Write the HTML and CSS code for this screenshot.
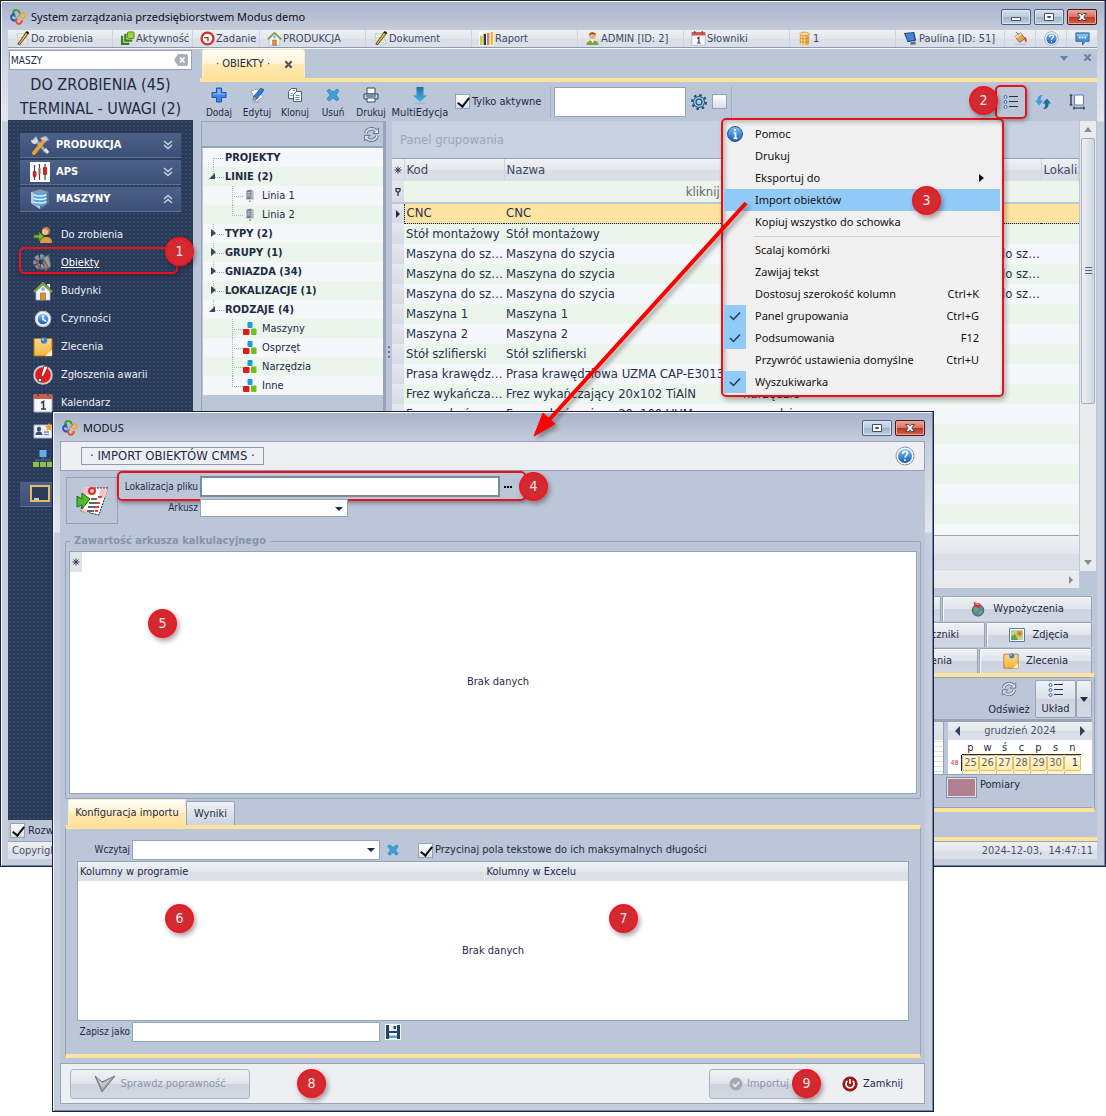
FILE: index.html
```html
<!DOCTYPE html>
<html lang="pl">
<head>
<meta charset="utf-8">
<meta name="viewport" content="width=device-width, initial-scale=1">
<title>System zarządzania przedsiębiorstwem Modus demo</title>
<link rel="stylesheet" href="styles.css">
</head>
<body>
<svg class="sprite" aria-hidden="true">
  <defs>
    <linearGradient id="g-blue" x1="0" y1="0" x2="0" y2="1"><stop offset="0" stop-color="#7fc4f5"/><stop offset="1" stop-color="#1458b8"/></linearGradient>
    <linearGradient id="g-gold" x1="0" y1="0" x2="0" y2="1"><stop offset="0" stop-color="#fbd98a"/><stop offset="1" stop-color="#f4b73c"/></linearGradient>
    <linearGradient id="g-down" x1="0" y1="0" x2="0" y2="1"><stop offset="0" stop-color="#1f6f9e"/><stop offset="1" stop-color="#4bb4e6"/></linearGradient>
  </defs>
  <symbol id="i-logo" viewBox="0 0 16 16"><g fill="none" stroke-width="2"><path d="M6 7.500A3.200 3.200 0 1 1 9.500 4.500" stroke="#3b9a3b"/><path d="M5 5.500A3 3 0 1 0 5.500 11" stroke="#2b4fc4"/><circle cx="12.500" cy="6.500" r="2.500" stroke="#f0a83c"/><path d="M7.500 9.500A2.800 2.800 0 1 0 11.500 11" stroke="#e0522a"/><path d="M5 11L11 4" stroke="#7387a8" stroke-width="1"/></g></symbol>
  <symbol id="i-pencil" viewBox="0 0 16 16"><path d="M2 3h9l3 11H4z" fill="#f4f4ee" stroke="#aab0b8" stroke-width=".6"/><path d="M4 7h7M4.500 9.500h8M5 12h7" stroke="#c3c8cf"/><path d="M3 14L12 1l2.500 1.500L5 14.500z" fill="#e8b92e" stroke="#3b3320" stroke-width=".9"/><path d="M11 1.500L14 3.500 15 1.500 13 0z" fill="#222"/></symbol>
  <symbol id="i-activity" viewBox="0 0 16 16"><path d="M1 5v10h9v-2.500H3.500V5zM4.500 3v8.500H13V9H7V3z" fill="#3f7f22"/><rect x="8" y="1" width="7" height="7" rx="1" fill="#9ed536" stroke="#4f8a22"/></symbol>
  <symbol id="i-clockred" viewBox="0 0 16 16"><circle cx="8" cy="8" r="6.300" fill="#fff" stroke="#c9302c" stroke-width="2.400"/><path d="M4.500 7H8.500V11" fill="none" stroke="#b02020" stroke-width="1.400"/></symbol>
  <symbol id="i-house" viewBox="0 0 20 20"><path d="M3 10L10 4l7 6v9H3z" fill="#f4f6f9" stroke="#aab3c0" stroke-width=".8"/><path d="M14 3h3v4l-3-3z" fill="#fff"/><path d="M1 11L10 2.500 19 11" fill="none" stroke="#7da33b" stroke-width="2.400"/><circle cx="10" cy="8" r="2" fill="#8fb7e8"/><path d="M7.500 12h5v7h-5z" fill="#e0903c" stroke="#b0702a" stroke-width=".8"/></symbol>
  <symbol id="i-report" viewBox="0 0 16 16"><path d="M0 0h16v16H0z" fill="#f7f8f4"/><path d="M1 5h3v10H1z" fill="#c3d432"/><path d="M5 3h2.500v12H5z" fill="#2b3350"/><path d="M8.500 2h2.500v13H8.500z" fill="#f07060"/><path d="M12.500 1H15v14h-2.500z" fill="#f4bd1a"/></symbol>
  <symbol id="i-user" viewBox="0 0 16 16"><path d="M1.500 15c0-4 3-5 6.500-5s6.500 1 6.500 5z" fill="#77a83a"/><path d="M6 9h4l-2 4z" fill="#fff"/><circle cx="8" cy="5" r="3.600" fill="#e8b078"/><path d="M4 5c0-5 8-5 8 0-1-2-6-2-8 0z" fill="#9a4a20"/></symbol>
  <symbol id="i-cal" viewBox="0 0 20 20"><path d="M1 2h18v17H1z" fill="#f7f8fa" stroke="#aab3c4"/><path d="M1 1.500h18V6H1z" fill="#cf5a48"/><path d="M5 0v3M15 0v3" stroke="#7c3a34" stroke-width="1.600"/><path d="M8 10l2.500-1.500V16M8 16h5" fill="none" stroke="#333c50" stroke-width="1.600"/></symbol>
  <symbol id="i-db" viewBox="0 0 16 16"><path d="M3 3v10c0 3 10 3 10 0V3z" fill="#e9a83a"/><path d="M5 4v11M8 4v12" stroke="#fbdf9e" stroke-width="1.600"/><ellipse cx="8" cy="3" rx="5" ry="1.800" fill="#fbe0a0" stroke="#c98a2a" stroke-width=".7"/><path d="M3 7c1 2 9 2 10 0M3 10.500c1 2 9 2 10 0" fill="none" stroke="#b87820" stroke-width=".7"/></symbol>
  <symbol id="i-pc" viewBox="0 0 16 16"><path d="M1 2l11-1 2 9-9 2z" fill="#27406f"/><path d="M2.500 3l8.500-.8 1.500 7-7 1.500z" fill="#3f86d8"/><path d="M8 12l5-1 1 3-6 1z" fill="#6a7384"/></symbol>
  <symbol id="i-paint" viewBox="0 0 16 16"><path d="M2 13.500h12V15H2z" fill="#c1c6ce"/><path d="M2 6l6-4 5 6-6 4z" fill="#e0a850" stroke="#7a4a1c" stroke-width=".8"/><path d="M2 6l6-4 1 2-6 4z" fill="#f8e3b4"/><path d="M13 6c2 2 2 5 1 6-2-1-2-4-1-6z" fill="#d64028"/><path d="M6 4L3 1" stroke="#555"/></symbol>
  <symbol id="i-help" viewBox="0 0 20 20"><circle cx="10" cy="10" r="9" fill="#fff" stroke="#8b93a3"/><circle cx="10" cy="10" r="7" fill="url(#g-blue)"/><path d="M7.500 8c0-3.500 5-3.200 5-.4 0 1.900-2.400 1.800-2.400 4M10 13.200V15" fill="none" stroke="#fff" stroke-width="1.700"/></symbol>
  <symbol id="i-chat" viewBox="0 0 16 16"><path d="M1 2h14v9h-4l-3 4v-4H1z" fill="#4a94cf" stroke="#2a6aa5"/><path d="M2 3h12v3H2z" fill="#82bbe8"/><path d="M4 7h2M7 7h2M10 7h2" stroke="#fff" stroke-width="1.500"/></symbol>
  <symbol id="i-tools" viewBox="0 0 20 20"><path d="M4 3l12 14" stroke="#9aa5b8" stroke-width="3"/><path d="M1 5c0 4 4 5 6 3l1-2-2-5-1 3-2 1z" fill="#d5dbe6"/><path d="M10 3l6-2 3 4-3 1-1 2-3-3z" fill="#c3cbd8" stroke="#7b879b" stroke-width=".5"/><path d="M13 7L4 18" stroke="#f0a030" stroke-width="3.600" stroke-linecap="round"/><path d="M15 14l3 4" stroke="#dde3ec" stroke-width="3"/></symbol>
  <symbol id="i-aps" viewBox="0 0 20 20"><path d="M0 0h20v20H0z" fill="#fff"/><path d="M4.500 3v15M9.500 2v16M15 2v16" stroke="#444" stroke-width="1.200"/><rect x="2.800" y="9" width="3.600" height="6" rx="1" fill="#cf2222"/><rect x="8.500" y="6" width="2" height="6" fill="#777"/><rect x="13" y="5" width="4" height="8" rx="1" fill="#cf2222"/></symbol>
  <symbol id="i-machine" viewBox="0 0 20 20"><path d="M1 3l9-2.500L19 3v11l-9 6-9-6z" fill="#8d9bb0"/><path d="M1 3l9 3v14l-9-6z" fill="#c2ccda"/><path d="M10 6l9-3v11l-9 6z" fill="#5c6d88"/><path d="M3.500 4h13v10c0 4-13 4-13 0z" fill="#58a6dc"/><path d="M3.500 5.500c2 2 11 2 13 0M3.500 9c2 2 11 2 13 0M3.500 12.500c2 2 11 2 13 0" fill="none" stroke="#e1f0fb" stroke-width="1.500"/></symbol>
  <symbol id="i-todo" viewBox="0 0 20 18"><circle cx="13" cy="5" r="4" fill="#c97a3a"/><circle cx="12" cy="6" r="3" fill="#f1c08c"/><path d="M7 17c0-5 3-6 6-6s6 1 6 6z" fill="#e09a3a"/><path d="M1 9h5V6l5 4.500L6 15v-3H1z" fill="#79b83a" stroke="#3f7a1c" stroke-width=".8"/></symbol>
  <symbol id="i-gearobj" viewBox="0 0 18 18"><circle cx="7" cy="8" r="4.500" fill="none" stroke="#8b939c" stroke-width="4.600" stroke-dasharray="3 1"/><path d="M9 4l5-2 2 10-5 4z" fill="#8fa4a0" stroke="#5c6e70"/><path d="M2 6l4 8M5 14h9M10 6l4 8" stroke="#a05248" stroke-width="1.300"/></symbol>
  <symbol id="i-clock" viewBox="0 0 18 18"><circle cx="9" cy="9" r="7" fill="#f5f6f8" stroke="#b6bcc8"/><circle cx="9" cy="9" r="4.800" fill="url(#g-blue)"/><path d="M9 5.500v4l3 1.500" fill="none" stroke="#fff" stroke-width="1.400"/></symbol>
  <symbol id="i-note" viewBox="0 0 20 20"><path d="M1 1.500h18V19H1z" fill="url(#g-gold)" stroke="#b9721f"/><path d="M12 19l7-6v6z" fill="#fff0bd"/><circle cx="11" cy="3.500" r="3.200" fill="#3f7fc4"/><circle cx="10" cy="2.500" r="1" fill="#bfe0fa"/></symbol>
  <symbol id="i-alarm" viewBox="0 0 20 20"><circle cx="10" cy="10" r="8.800" fill="#e31b1b" stroke="#c5c8cc" stroke-width="2"/><path d="M11 1l4 1-5 10-2-1zM6 13l3 1-1 3-3-1z" fill="#fff" stroke="#7a1414" stroke-width=".8"/></symbol>
  <symbol id="i-card" viewBox="0 0 20 16"><path d="M1 2h18v13H1z" fill="#eef2f7" stroke="#a8b4c6"/><circle cx="6" cy="6" r="2.200" fill="#35507a"/><path d="M2.500 12c0-5 7-5 7 0z" fill="#35507a"/><path d="M11 9h5M11 11.500h5" stroke="#7f92ac" stroke-width="1.300"/><path d="M16 0l1.500 2.500L20 3l-2 2 .5 3L16 6.500 13.500 8l.5-3-2-2 2.500-.5z" fill="#f2a33a"/></symbol>
  <symbol id="i-org" viewBox="0 0 20 20"><path d="M10 7v4M3 13v-2h14v2" stroke="#55729a" fill="none"/><rect x="6.500" y="1" width="7" height="7" fill="#5fb0ea"/><path d="M0 13h6v5H0zM7 13h6v5H7zM14 13h6v5h-6z" fill="#8fc43a"/></symbol>
  <symbol id="i-board" viewBox="0 0 20 18"><path d="M1 1h18v15H1z" fill="#2c3d5c" stroke="#e9b76a" stroke-width="2"/><path d="M4 14h5" stroke="#fff" stroke-width="1.500"/></symbol>
  <symbol id="i-plus" viewBox="0 0 16 16"><path d="M5.500 1h5v4.500H15v5h-4.500V15h-5v-4.500H1v-5h4.500z" fill="#3f86e8" stroke="#2350b8"/><path d="M6.500 2h3v4.500H14v1H2v-1h4.500z" fill="#7fb4fa"/></symbol>
  <symbol id="i-edit" viewBox="0 0 16 16"><path d="M2 4l6-2 6 8-7 5z" fill="#fff" stroke="#9aa3b4"/><path d="M4 13l1-4 7-8 3 2-7 9z" fill="#2c7fd8" stroke="#1b4f9a" stroke-width=".8"/><path d="M4 13l1-3 2 2z" fill="#f0b060"/><path d="M3 15h9" stroke="#9aa3b4"/></symbol>
  <symbol id="i-clone" viewBox="0 0 16 16"><g fill="#fff" stroke="#4a6184"><path d="M4.500 1.500h5v10h-8v-7z"/><path d="M9.500 4.500h5v10h-8v-7z"/></g><path d="M8.500 8.500h4M8.500 10.500h4M8.500 12.500h4M3.500 6.500h2M3.500 8.500h2M6 3.500h2" stroke="#5d86bd"/></symbol>
  <symbol id="i-x" viewBox="0 0 16 16"><path d="M2 4l2-2 4 3 4-3 2 2-3 4 3 4-2 2-4-3-4 3-2-2 3-4z" fill="#3da0d8" stroke="#2b82b8" stroke-width=".7"/></symbol>
  <symbol id="i-print" viewBox="0 0 16 16"><path d="M4 1h8v6H4z" fill="#fff" stroke="#33486b"/><path d="M1 7h14v5H1z" fill="#c7d6ea" stroke="#26406e"/><path d="M3 9h10" stroke="#26406e"/><path d="M4 11h8v4H4z" fill="#fff" stroke="#33486b"/></symbol>
  <symbol id="i-down" viewBox="0 0 16 18"><path d="M4.500 0h7v8.500h3.500l-7 6.500-7-6.500h3.500z" fill="url(#g-down)"/><path d="M2 16.500h12" stroke="#a5b8cc" stroke-width="1.500"/></symbol>
  <symbol id="i-gear" viewBox="0 0 18 18"><circle cx="9" cy="9" r="7" fill="none" stroke="#1d4f74" stroke-width="2" stroke-dasharray="2.600 2.900"/><circle cx="9" cy="9" r="5.400" fill="#cfe6f4" stroke="#1d5f8c" stroke-width="1.200"/><circle cx="9" cy="9" r="3" fill="#bcc7d8" stroke="#1d5f8c" stroke-width="1.400"/></symbol>
  <symbol id="i-list" viewBox="0 0 16 16"><g fill="#dcecf8" stroke="#3c6ea8"><circle cx="2.500" cy="3" r="1.500"/><circle cx="2.500" cy="8" r="1.500"/><circle cx="2.500" cy="13" r="1.500"/></g><path d="M6 2.500h9M6 7.500h9M6 12.500h9" stroke="#27304a" stroke-width="1"/></symbol>
  <symbol id="i-sync" viewBox="0 0 16 16"><path d="M8 1C4 1 2 3 2.500 6.500H0l4 5 4.500-5H6C5.500 4.500 6 2.500 8 1z" fill="#3aa0da"/><path d="M8 15c4 0 6-2 5.500-5.500H16l-4-5-4.500 5H10c.5 2 0 4-2 5.500z" fill="#1c6f9f"/></symbol>
  <symbol id="i-fit" viewBox="0 0 16 16"><path d="M5.500 1h9v10h-9z" fill="#fdfdfe" stroke="#5c7ab0"/><path d="M2 1v10M.5 1h3M.5 11h3M5 14h10M5 12.500v3M15 12.500v3" stroke="#1f2638" stroke-width="1.200"/></symbol>
  <symbol id="i-refresh" viewBox="0 0 18 18"><g fill="none" stroke="#5c6c90" stroke-width="3.600"><path d="M3 8C4 2.500 11 1.500 14 5"/><path d="M15 10c-1 5.500-8 6.500-11 3"/></g><path d="M16.500 2v6h-6zM1.500 16v-6h6z" fill="#dfe6f2" stroke="#5c6c90"/><g fill="none" stroke="#dfe6f2" stroke-width="1.800"><path d="M3 8C4 2.500 11 1.500 14 5"/><path d="M15 10c-1 5.500-8 6.500-11 3"/></g></symbol>
  <symbol id="i-building" viewBox="0 0 12 16"><path d="M2 2l5-1.500V12H2z" fill="#777a94"/><path d="M7 .5L10 2v10H7z" fill="#a8aabd"/><path d="M3 4h3M3 6h3M3 8h3M8 4h1M8 6h1M8 8h1" stroke="#e8e9f1" stroke-width=".8"/><path d="M1 12h10" stroke="#d0d3df"/><path d="M5 14h2" stroke="#36d048" stroke-width="1.600"/></symbol>
  <symbol id="i-cubes" viewBox="0 0 14 14"><rect x="4.500" y="0" width="5" height="6" rx="1" fill="#1c9be0"/><rect x="0" y="7" width="6.500" height="6" rx="1" fill="#e01818"/><rect x="8" y="6.500" width="5.500" height="6.500" rx="1" fill="#6cc01e"/></symbol>
  <symbol id="i-info" viewBox="0 0 18 18"><circle cx="9" cy="9" r="7.500" fill="url(#g-blue)" stroke="#1c5f9c"/><path d="M9 4v2M7.500 8H9.500v5M7.500 13.300h4" fill="none" stroke="#fff" stroke-width="1.700"/></symbol>
  <symbol id="i-globe" viewBox="0 0 16 18"><circle cx="8" cy="10.500" r="6.500" fill="#5a86b0" stroke="#2f5d50"/><path d="M3 8l4-1 1 3-3 3zM9 12l4-2-1 4-3 2z" fill="#69b04a"/><path d="M3 1l8 2-1 5-6-2z" fill="#d83030"/><path d="M5 3l4 1" stroke="#fbd0d0"/></symbol>
  <symbol id="i-photo" viewBox="0 0 16 14"><path d="M.5.500h15v13H.5z" fill="#fff" stroke="#5b77ad"/><path d="M2 2h12v10H2z" fill="#b8d48c"/><path d="M2 9l4-3 3 6H2z" fill="#6aa33a"/><circle cx="10.500" cy="5.500" r="3" fill="#e39a4a"/><circle cx="10.500" cy="5.500" r="1.100" fill="#a05418"/></symbol>
  <symbol id="i-import" viewBox="0 0 36 32"><path d="M11 3h23l-9 27-18-4z" fill="#fff" stroke="#222" stroke-dasharray="2 1"/><path d="M10 2h11l-2 8H8zM26 4l8 0-3 9-6-1zM7 26l3-3 6 6z" fill="#f7c2c0"/><circle cx="18" cy="6" r="3" fill="#f4c0bc" stroke="#d83030" stroke-width="2"/><path d="M17 14h6M15 18h8M14 22h8M13 26h7" stroke="#333" stroke-width="1.300"/><path d="M24 12h4M23 18h3M22 22h3M21 26h3" stroke="#e04040" stroke-width="2"/><path d="M3 11l5 3V8l8 6-8 10v-4l-5 2z" fill="#4fbd24" stroke="#27601c"/></symbol>
  <symbol id="i-save" viewBox="0 0 16 16"><path d="M0 0h16v16H0z" fill="#f2f5f8"/><path d="M1 1h14v14H1z" fill="#26405f"/><path d="M4 1h8v6H4z" fill="#e4ebf2"/><path d="M8.500 2h2.500v3H8.500z" fill="#26405f"/><path d="M4 9h8v6H4z" fill="#fff"/><path d="M4 11.500h8V14H4z" fill="#4f9fda"/></symbol>
  <symbol id="i-verify" viewBox="0 0 22 18"><path d="M1 1l7 6L21 1 8 17z" fill="#9b9da1" stroke="#74767b"/><path d="M3 3l5 5 1 6z" fill="#d4d6da"/><path d="M8 8l10-5-9 10z" fill="#c3c5ca"/></symbol>
  <symbol id="i-ok" viewBox="0 0 14 14"><circle cx="7" cy="7" r="6.500" fill="#a6a9af"/><path d="M4 7l2.300 2.300L10.300 5" fill="none" stroke="#e9eaee" stroke-width="1.800"/></symbol>
  <symbol id="i-power" viewBox="0 0 18 18"><circle cx="9" cy="9" r="8" fill="#b01010" stroke="#6a1212"/><path d="M6 5.500a4.500 4.500 0 1 0 6 0M9 3.500V9" fill="none" stroke="#fff" stroke-width="2"/></symbol>
  <symbol id="i-clear" viewBox="0 0 14 12"><path d="M4 0h8q2 0 2 2v8q0 2-2 2H4L0 6z" fill="#a9b0ba"/><path d="M6 3.500l4.500 5M10.500 3.500L6 8.500" stroke="#fff" stroke-width="1.700"/></symbol>
  <symbol id="i-chev" viewBox="0 0 10 10"><path d="M1 1l4 3.500L9 1M1 5l4 3.500L9 5" fill="none" stroke="#c9d3e3" stroke-width="1.400"/></symbol>
  <symbol id="i-close" viewBox="0 0 10 10"><path d="M1.500 1.500l7 7M8.500 1.500l-7 7" stroke="currentColor" stroke-width="2.400"/></symbol>
  <symbol id="i-star" viewBox="0 0 8 8"><path d="M4 .5v7M.5 4h7M1.500 1.500l5 5M6.500 1.500l-5 5" stroke="#27304a" stroke-width=".9"/></symbol>
  <symbol id="i-pin" viewBox="0 0 8 8"><path d="M2 .5h4v2.500L4 4.500 2 3zM4 4v4" fill="none" stroke="#27304a" stroke-width="1.300"/></symbol>
  <symbol id="i-check" viewBox="0 0 12 10"><path d="M1 5l3.500 3.500L11 1.500" fill="none" stroke="#233a57" stroke-width="1.500"/></symbol>
  <symbol id="i-wmin" viewBox="0 0 12 10"><path d="M1.500 5.500h9v3h-9z" fill="#fff" stroke="#44506a"/></symbol>
  <symbol id="i-wmax" viewBox="0 0 12 10"><path d="M1.500 1.500h9v7h-9z" fill="#fff" stroke="#44506a"/><path d="M4.500 4.500h3v1h-3z" fill="#fff" stroke="#44506a"/></symbol>
  <symbol id="i-wclose" viewBox="0 0 12 10"><path d="M1.500 1.500h3L6 3.200 7.500 1.500h3L7.800 5l2.700 3.500h-3L6 6.800 4.500 8.500h-3L4.200 5z" fill="#fff" stroke="#4f3a48" stroke-width=".9"/></symbol>
</svg>

<div class="desktop">
  <section class="window">
    <header class="titlebar">
      <svg class="logo"><use href="#i-logo"/></svg>
      <h1>System zarządzania przedsiębiorstwem Modus demo</h1>
      <div class="winbtns">
        <button type="button" aria-label="Minimalizuj"><svg><use href="#i-wmin"/></svg></button>
        <button type="button" aria-label="Maksymalizuj"><svg><use href="#i-wmax"/></svg></button>
        <button type="button" class="red" aria-label="Zamknij okno"><svg><use href="#i-wclose"/></svg></button>
      </div>
    </header>

    <nav class="quickbar">
      <a href="#"><svg><use href="#i-pencil"/></svg>Do zrobienia</a>
      <a href="#"><svg><use href="#i-activity"/></svg>Aktywność</a>
      <a href="#"><svg><use href="#i-clockred"/></svg>Zadanie</a>
      <a href="#"><svg><use href="#i-house"/></svg>PRODUKCJA</a>
      <a href="#"><svg><use href="#i-pencil"/></svg>Dokument</a>
      <a href="#"><svg><use href="#i-report"/></svg>Raport</a>
      <a href="#"><svg><use href="#i-user"/></svg>ADMIN [ID: 2]</a>
      <a href="#"><svg><use href="#i-cal"/></svg>Słowniki</a>
      <a href="#"><svg><use href="#i-db"/></svg>1</a>
      <a href="#"><svg><use href="#i-pc"/></svg>Paulina [ID: 51]</a>
      <a href="#" aria-label="Kolory"><svg><use href="#i-paint"/></svg></a>
      <a href="#" aria-label="Pomoc"><svg><use href="#i-help"/></svg></a>
      <a href="#" aria-label="Wiadomości"><svg><use href="#i-chat"/></svg></a>
    </nav>

    <div class="workspace">
      <aside class="sidebar">
        <div class="search">
          <input type="text" value="MASZY" aria-label="Szukaj w menu">
          <svg><use href="#i-clear"/></svg>
        </div>
        <p class="counter">DO ZROBIENIA (45)</p>
        <p class="counter">TERMINAL - UWAGI (2)</p>
        <div class="navy">
          <button type="button" class="group"><svg><use href="#i-tools"/></svg><span>PRODUKCJA</span><svg class="chev"><use href="#i-chev"/></svg></button>
          <button type="button" class="group"><svg><use href="#i-aps"/></svg><span>APS</span><svg class="chev"><use href="#i-chev"/></svg></button>
          <button type="button" class="group"><svg><use href="#i-machine"/></svg><span>MASZYNY</span><svg class="chev up"><use href="#i-chev"/></svg></button>
          <ul class="links">
            <li><a href="#"><svg><use href="#i-todo"/></svg>Do zrobienia</a></li>
            <li class="current"><a href="#"><svg><use href="#i-gearobj"/></svg>Obiekty</a><span class="mark mark-nav"></span><span class="badge badge-1">1</span></li>
            <li><a href="#"><svg><use href="#i-house"/></svg>Budynki</a></li>
            <li><a href="#"><svg><use href="#i-clock"/></svg>Czynności</a></li>
            <li><a href="#"><svg><use href="#i-note"/></svg>Zlecenia</a></li>
            <li><a href="#"><svg><use href="#i-alarm"/></svg>Zgłoszenia awarii</a></li>
            <li><a href="#"><svg><use href="#i-cal"/></svg>Kalendarz</a></li>
            <li><a href="#" aria-label="Kontakty"><svg><use href="#i-card"/></svg></a></li>
            <li><a href="#" aria-label="Struktura"><svg><use href="#i-org"/></svg></a></li>
          </ul>
          <button type="button" class="group" aria-label="Tablica"><svg><use href="#i-board"/></svg></button>
        </div>
        <label class="expand"><input type="checkbox" checked>Rozwiń</label>
      </aside>

      <main class="main">
        <div class="tabbar">
          <button type="button" class="tab">· OBIEKTY ·<svg><use href="#i-close"/></svg></button>
          <div class="tabtools"><i class="tri"></i><svg><use href="#i-close"/></svg></div>
        </div>
        <div class="toolbar">
          <button type="button" class="tool"><svg><use href="#i-plus"/></svg>Dodaj</button>
          <button type="button" class="tool"><svg><use href="#i-edit"/></svg>Edytuj</button>
          <button type="button" class="tool"><svg><use href="#i-clone"/></svg>Klonuj</button>
          <button type="button" class="tool"><svg><use href="#i-x"/></svg>Usuń</button>
          <button type="button" class="tool"><svg><use href="#i-print"/></svg>Drukuj</button>
          <button type="button" class="tool wide"><svg><use href="#i-down"/></svg>MultiEdycja</button>
          <label class="active-only"><input type="checkbox" checked>Tylko aktywne</label>
          <input type="text" class="find" aria-label="Wyszukaj">
          <svg class="gear"><use href="#i-gear"/></svg>
          <input type="checkbox" class="flag" aria-label="Filtr">
          <div class="toolbar-end">
            <button type="button" class="listbtn" aria-label="Menu siatki"><svg><use href="#i-list"/></svg><span class="badge badge-2">2</span></button>
            <svg><use href="#i-sync"/></svg>
            <svg><use href="#i-fit"/></svg>
          </div>
        </div>

        <div class="split">
          <div class="treepane">
            <div class="treehead"><svg><use href="#i-refresh"/></svg></div>
            <ul class="tree">
              <li>PROJEKTY</li>
              <li class="open">LINIE (2)</li>
              <li class="sub"><svg><use href="#i-building"/></svg>Linia 1</li>
              <li class="sub last"><svg><use href="#i-building"/></svg>Linia 2</li>
              <li class="shut">TYPY (2)</li>
              <li class="shut">GRUPY (1)</li>
              <li class="shut">GNIAZDA (34)</li>
              <li class="shut">LOKALIZACJE (1)</li>
              <li class="open end">RODZAJE (4)</li>
              <li class="sub"><svg><use href="#i-cubes"/></svg>Maszyny</li>
              <li class="sub"><svg><use href="#i-cubes"/></svg>Osprzęt</li>
              <li class="sub"><svg><use href="#i-cubes"/></svg>Narzędzia</li>
              <li class="sub last"><svg><use href="#i-cubes"/></svg>Inne</li>
            </ul>
          </div>
          <div class="splitter"></div>
          <div class="gridpane">
            <div class="gridview">
              <div class="grouppanel">Panel grupowania</div>
              <div class="rows">
                <table class="grid">
                  <colgroup><col class="c-mark"><col class="c-kod"><col class="c-nazwa"><col class="c-kod"><col class="c-kod"><col class="c-kod"><col></colgroup>
                  <thead>
                    <tr><th><svg><use href="#i-star"/></svg></th><th>Kod</th><th>Nazwa</th><th></th><th></th><th></th><th>Lokalizacja</th></tr>
                    <tr class="filter"><td class="ind"><svg><use href="#i-pin"/></svg></td><td colspan="6">kliknij aby filtrować</td></tr>
                  </thead>
                  <tbody>
                    <tr class="sel"><td><i class="rowmark"></i></td><td>CNC</td><td>CNC</td><td></td><td></td><td></td><td></td></tr>
                    <tr><td></td><td>Stół montażowy</td><td>Stół montażowy</td><td></td><td></td><td></td><td></td></tr>
                    <tr><td></td><td>Maszyna do szycia</td><td>Maszyna do szycia</td><td></td><td></td><td>Maszyna do szycia</td><td></td></tr>
                    <tr><td></td><td>Maszyna do szycia</td><td>Maszyna do szycia</td><td></td><td></td><td>Maszyna do szycia</td><td></td></tr>
                    <tr><td></td><td>Maszyna do szycia</td><td>Maszyna do szycia</td><td></td><td></td><td>Maszyna do szycia</td><td></td></tr>
                    <tr><td></td><td>Maszyna 1</td><td>Maszyna 1</td><td></td><td></td><td></td><td></td></tr>
                    <tr><td></td><td>Maszyna 2</td><td>Maszyna 2</td><td></td><td></td><td></td><td></td></tr>
                    <tr><td></td><td>Stół szlifierski</td><td>Stół szlifierski</td><td></td><td></td><td></td><td></td></tr>
                    <tr><td></td><td>Prasa krawędziowa</td><td>Prasa krawędziowa UZMA CAP-E3013</td><td></td><td></td><td></td><td></td></tr>
                    <tr><td></td><td>Frez wykańczający</td><td>Frez wykańczający 20x102 TiAlN</td><td>narzędzie</td><td></td><td></td><td></td></tr>
                    <tr><td></td><td>Frez wykańczający</td><td>Frez wykańczający 20x100 VHM</td><td>narzędzie</td><td></td><td></td><td></td></tr>
                    <tr><td></td><td></td><td></td><td></td><td></td><td></td><td></td></tr>
                    <tr><td></td><td></td><td></td><td></td><td></td><td></td><td></td></tr>
                    <tr><td></td><td></td><td></td><td></td><td></td><td></td><td></td></tr>
                    <tr><td></td><td></td><td></td><td></td><td></td><td></td><td></td></tr>
                    <tr><td></td><td></td><td></td><td></td><td></td><td></td><td></td></tr>
                    <tr><td></td><td></td><td></td><td></td><td></td><td></td><td></td></tr>
                  </tbody>
                </table>
              </div>
              <div class="summary"></div>
              <div class="hscroll"><i></i></div>
            </div>
            <div class="vscroll"><i class="up"></i><span class="thumb"><b></b></span><i class="down"></i></div>
          </div>
        </div>

        <div class="lowtabs">
          <div><button type="button" class="rest"></button><button type="button" class="t1"><svg><use href="#i-globe"/></svg>Wypożyczenia</button></div>
          <div><button type="button" class="rest">Załączniki</button><button type="button" class="t2"><svg><use href="#i-photo"/></svg>Zdjęcia</button></div>
          <div><button type="button" class="rest">Zgłoszenia</button><button type="button" class="t3"><svg><use href="#i-note"/></svg>Zlecenia</button></div>
        </div>

        <div class="planner">
          <div class="plannerbar">
            <button type="button" class="tool"><svg><use href="#i-refresh"/></svg>Odśwież</button>
            <button type="button" class="tool raised"><svg><use href="#i-list"/></svg>Układ</button>
            <button type="button" class="drop" aria-label="Więcej układów"><i class="tri"></i></button>
          </div>
          <div class="plannerbody">
            <div class="timeline"></div>
            <div class="month">
              <div class="monthhead"><i class="left"></i>grudzień 2024<i class="right"></i></div>
              <table>
                <thead><tr><th class="week"></th><th>p</th><th>w</th><th>ś</th><th>c</th><th>p</th><th>s</th><th>n</th></tr></thead>
                <tbody>
                  <tr><th>48</th><td>25</td><td>26</td><td>27</td><td>28</td><td>29</td><td>30</td><td class="now">1</td></tr>
                </tbody>
              </table>
              <div class="nextweek"></div>
            </div>
          </div>
          <div class="legend"><i></i>Pomiary</div>
        </div>
        <div class="mainend"></div>
      </main>
    </div>
    <footer class="status"><span>Copyright ©</span><time>2024-12-03,&nbsp; 14:47:11</time></footer>

    <ul class="menu">
      <li><svg><use href="#i-info"/></svg><span>Pomoc</span></li>
      <li><span>Drukuj</span></li>
      <li><span>Eksportuj do</span><i></i></li>
      <li class="hot"><span>Import obiektów</span><span class="badge badge-3">3</span></li>
      <li><span>Kopiuj wszystko do schowka</span></li>
      <li class="line"></li>
      <li><span>Scalaj komórki</span></li>
      <li><span>Zawijaj tekst</span></li>
      <li><span>Dostosuj szerokość kolumn</span><kbd>Ctrl+K</kbd></li>
      <li class="on"><svg><use href="#i-check"/></svg><span>Panel grupowania</span><kbd>Ctrl+G</kbd></li>
      <li class="on"><svg><use href="#i-check"/></svg><span>Podsumowania</span><kbd>F12</kbd></li>
      <li><span>Przywróć ustawienia domyślne</span><kbd>Ctrl+U</kbd></li>
      <li class="on"><svg><use href="#i-check"/></svg><span>Wyszukiwarka</span></li>
    </ul>
  </section>

  <section class="window dialog">
    <header class="titlebar">
      <svg class="logo"><use href="#i-logo"/></svg>
      <h2>MODUS</h2>
      <div class="winbtns">
        <button type="button" aria-label="Maksymalizuj"><svg><use href="#i-wmax"/></svg></button>
        <button type="button" class="red" aria-label="Zamknij okno"><svg><use href="#i-wclose"/></svg></button>
      </div>
    </header>
    <div class="dialoghead"><h3>· IMPORT OBIEKTÓW CMMS ·</h3><svg><use href="#i-help"/></svg></div>
    <div class="dialogbody">
      <div class="source">
        <button type="button" class="importicon" aria-label="Import"><svg><use href="#i-import"/></svg></button>
        <div class="fields">
          <div class="field filefield">
            <label for="file">Lokalizacja pliku</label><input id="file" type="text"><button type="button" class="dots" aria-label="Wybierz plik"><i></i><i></i><i></i></button>
            <span class="mark mark-file"></span><span class="badge badge-4">4</span>
          </div>
          <div class="field">
            <label for="sheet">Arkusz</label><span class="combo small"><select id="sheet"><option></option></select></span>
          </div>
        </div>
      </div>
      <fieldset>
        <legend>Zawartość arkusza kalkulacyjnego</legend>
        <div class="sheet"><span class="corner"><svg><use href="#i-star"/></svg></span>Brak danych<span class="badge badge-5">5</span></div>
      </fieldset>
      <div class="dtabs"><button type="button" class="on">Konfiguracja importu</button><button type="button">Wyniki</button></div>
      <div class="config">
        <div class="field">
          <label for="load">Wczytaj</label><span class="combo"><select id="load"><option></option></select></span><svg class="clearx"><use href="#i-x"/></svg>
          <label class="trim"><input type="checkbox" checked>Przycinaj pola tekstowe do ich maksymalnych długości</label>
        </div>
        <div class="mapping">
          <table><thead><tr><th>Kolumny w programie</th><th>Kolumny w Excelu</th></tr></thead></table>
          <p>Brak danych</p>
          <span class="badge badge-6">6</span><span class="badge badge-7">7</span>
        </div>
        <div class="field saverow">
          <label for="saveas">Zapisz jako</label><input id="saveas" type="text"><svg class="save"><use href="#i-save"/></svg>
        </div>
      </div>
    </div>
    <footer class="dialogfoot">
      <button type="button" class="push check" disabled><svg><use href="#i-verify"/></svg>Sprawdz poprawność</button>
      <span class="badge badge-8">8</span>
      <button type="button" class="push import" disabled><svg><use href="#i-ok"/></svg>Importuj</button>
      <button type="button" class="quit"><svg><use href="#i-power"/></svg>Zamknij</button>
      <span class="badge badge-9">9</span>
    </footer>
  </section>

  <svg class="arrow" viewBox="0 0 230 250" aria-hidden="true"><path d="M221 8L24 225" stroke="#f00" stroke-width="4"/><path d="M9 241l9-23 12 11z" fill="#f00" stroke="#f00"/></svg>
</div>
</body>
</html>
```
FILE: styles.css
```css
* { box-sizing: border-box; }
:root {
  --ui: "DejaVu Sans Condensed", "DejaVu Sans", Tahoma, sans-serif;
  --seg: "Noto Sans", "Segoe UI", sans-serif;
  --bg: #bbc7d8;
  --line: #97a3b9;
  --ink: #1f2a44;
  --pale: linear-gradient(#eef0f3 0, #e3e7ed 50%, #d9dee7 51%, #dadfe8);
  --yellow: #ffe39c;
}
body { margin: 0; background: #fff; font: 11px/14px var(--ui); color: var(--ink); }
h1, h2, h3, p, ul { margin: 0; padding: 0; font-weight: normal; }
ul { list-style: none; }
a { color: inherit; text-decoration: none; }
button, input, select { font: inherit; color: inherit; padding: 0; border-radius: 0; }
button { border: 0; background: none; }
input[type="text"], select { background: #fff; border: 1px solid var(--line); outline: 0; }
input[type="checkbox"] {
  appearance: none; margin: 0; width: 15px; height: 15px; flex: none;
  border: 1px solid #98a2b3; background: linear-gradient(#fff, #d9dee6); position: relative;
}
input[type="checkbox"]:checked::after {
  content: ""; position: absolute; left: 4px; top: 0; width: 5px; height: 10px;
  border: solid #111; border-width: 0 2px 2px 0; transform: rotate(38deg);
}
svg { display: block; flex: none; }
.sprite { position: absolute; width: 0; height: 0; }
.desktop { position: relative; min-height: 1116px; }

/* window chrome */
.window {
  position: relative; border: 1px solid #1b2540; padding: 0 8px 7px 7px;
  background: linear-gradient(#fff, #fff) 0 0 / 100% 1px no-repeat, linear-gradient(#a7b2cb, #c6cddb 30px, #e2e7f0 120px, #c6cddc 121px);
  box-shadow: inset 1px 0 #f2f5fa, inset -1px -1px #6f86b3;
}
.titlebar { height: 29px; display: flex; align-items: center; gap: 5px; padding: 3px 0 0 2px; font: 11px/16px var(--seg); color: #0b0f1c; }
.titlebar h1, .titlebar h2 { font-size: 11px; flex: 1; }
.logo { width: 16px; height: 16px; }
.winbtns { display: flex; gap: 3px; }
.winbtns button {
  width: 30px; height: 16px; border: 1px solid #4c5f80; border-radius: 2px; display: grid; place-items: center;
  background: linear-gradient(#d6e1ee, #bccadd 50%, #9fb3ca 51%, #bfd2e2); box-shadow: inset 0 0 0 1px #dfe8f2;
}
.winbtns svg { width: 12px; height: 10px; }
.winbtns .red { border-color: #4a1420; background: linear-gradient(#eba99c, #d9705f 50%, #b93420 51%, #d2674e); box-shadow: inset 0 0 0 1px #eda598; }

.quickbar {
  display: grid; grid-template-columns: 105px 80px 67px repeat(6, 106px) 109px 31px 31px 1fr; height: 18px;
  background: var(--pale); border-bottom: 1px solid #8f99ad; color: #3e4966;
}
.quickbar a { display: flex; align-items: center; gap: 1px; padding-left: 7px; border-right: 1px solid #cfd5df; overflow: hidden; white-space: nowrap; }
.quickbar a:nth-child(n+11) { padding: 0; justify-content: center; }
.quickbar a:last-child { border: 0; }
.quickbar svg { width: 15px; height: 15px; }

.workspace { display: flex; gap: 7px; background: var(--bg); border-top: 1px solid #f4f7fa; }
.sidebar { width: 185px; flex: none; display: flex; flex-direction: column; }
.search { display: flex; align-items: center; margin: 1px 1px 2px; background: #fff; border: 1px solid var(--line); height: 20px; padding-right: 3px; }
.search input { border: 0; flex: 1; min-width: 0; padding: 0 1px; height: 16px; background: none; font-size: 10px; }
.search svg { width: 14px; height: 12px; }
.counter { font-size: 16px; line-height: 25px; height: 24px; text-align: center; white-space: nowrap; }
.navy {
  flex: 1; padding: 13px 12px 0; display: flex; flex-direction: column; gap: 2px; background-color: #2b3a57;
  background-image: radial-gradient(#33486a 1px, transparent 1px); background-size: 4px 4px;
}
.group {
  height: 25px; flex: none; display: flex; align-items: center; gap: 6px; padding: 0 8px 0 10px; color: #fff; font-weight: bold;
  background: linear-gradient(#4d6187, #3c5078); border-bottom: 1px solid #5b7198; text-align: left;
}
.group svg { width: 20px; height: 20px; }
.group span { flex: 1; }
.group .chev { width: 10px; height: 10px; }
.group .up { transform: rotate(180deg); }
.links { padding: 7px 0; color: #e9eef6; }
.links li { position: relative; height: 28px; }
.links a { display: flex; align-items: center; gap: 8px; height: 28px; padding-left: 13px; }
.links svg { width: 20px; height: 20px; }
.current a { text-decoration: underline; color: #fff; }
.expand { height: 21px; display: flex; align-items: center; gap: 3px; padding-left: 2px; }

/* document area */
.main { flex: 1; min-width: 0; }
.tabbar { display: flex; justify-content: space-between; height: 29px; padding: 0 5px 0 2px; }
.tab {
  display: flex; align-items: center; gap: 14px; width: 103px; padding-left: 13px; border: 1px solid #f7ecd0; border-bottom: 0;
  border-radius: 3px 3px 0 0; background: linear-gradient(#fffdf6, #fff3d2 50%, #ffe9b4 51%, var(--yellow)); white-space: nowrap;
}
.tab svg { width: 9px; height: 9px; color: #4a5468; }
.tabtools { display: flex; gap: 15px; padding-top: 4px; color: #6b80ab; }
.tabtools svg { width: 9px; height: 9px; }
.tri { width: 0; height: 0; border: 4px solid transparent; border-top: 5px solid currentColor; border-bottom: 0; }
.tabtools .tri { margin-top: 3px; }
.toolbar { height: 43px; border-top: 4px solid var(--yellow); display: flex; align-items: center; padding: 0 4px 0 0; }
.tool { width: 38px; height: 36px; display: flex; flex-direction: column; align-items: center; justify-content: space-between; padding: 3px 0 1px; font-size: 10px; line-height: 13px; white-space: nowrap; }
.tool svg { width: 16px; height: 16px; }
.tool.wide { width: 60px; font-size: 11px; }
.tool.wide svg { height: 18px; }
.active-only { display: flex; align-items: center; gap: 2px; padding: 0 9px 0 5px; border-right: 1px solid #a3afc3; height: 32px; white-space: nowrap; }
.find { width: 132px; height: 30px; margin: 0 4px 0 3px; }
.gear { width: 18px; height: 18px; margin-right: 4px; }
input[type="checkbox"].flag { margin-right: 4px; }
.toolbar-end { flex: 1; display: flex; align-items: center; justify-content: flex-end; gap: 18px; height: 32px; border-left: 1px solid #a3afc3; padding-right: 8px; }
.toolbar-end svg { width: 16px; height: 16px; }
.listbtn { position: relative; z-index: 6; width: 32px; height: 34px; margin-right: -10px; display: grid; place-items: center; border: 2px solid #e8121a; border-radius: 5px; box-shadow: 1px 2px 4px rgba(60, 40, 60, .4); }

.split { display: flex; height: 468px; margin-right: 1px; }
.treepane { width: 185px; flex: none; border: solid #97a3b9; border-width: 1px 3px 0 1px; margin-left: 1px; }
.treehead { height: 26px; border-bottom: 2px solid #97a3b9; display: flex; justify-content: flex-end; align-items: center; padding-right: 3px; }
.treehead svg { width: 17px; height: 17px; }
.tree { margin-left: 1px; }
.tree li { position: relative; height: 19px; line-height: 19px; padding-left: 22px; font-weight: bold; background: #f5f7fa; white-space: nowrap; }
.tree li:nth-child(even) { background: #ebf5ec; }
.tree li::before { content: ""; position: absolute; left: 10px; top: 0; width: 10px; height: 10px; border: dotted #a8b0bd; border-width: 0 0 1px 1px; }
.tree li::after { content: ""; position: absolute; left: 10px; top: 10px; height: 9px; border-left: 1px dotted #a8b0bd; }
.tree li:first-child::before { border-left: 0; }
.tree .sub { display: flex; align-items: center; gap: 5px; padding-left: 40px; font-weight: normal; }
.tree .sub::before, .tree .sub::after { left: 29px; }
.tree .last::after { display: none; }
.tree svg { width: 14px; height: 14px; }
.tree .shut::after { left: 8px; top: 5px; height: 0; border: 4px solid transparent; border-left: 5px solid #3c465a; border-right: 0; }
.tree .open::after { left: 6px; top: 6px; height: 0; border: 3px solid transparent; border-color: transparent #3c465a #3c465a transparent; }
.splitter { width: 6px; flex: none; background: linear-gradient(#5c74ad, #5c74ad) 2px 225px / 2px 2px no-repeat, linear-gradient(#5c74ad, #5c74ad) 2px 230px / 2px 2px no-repeat, linear-gradient(#5c74ad, #5c74ad) 2px 235px / 2px 2px no-repeat; }
.gridpane { flex: 1; min-width: 0; display: flex; gap: 1px; }
.gridview { flex: 1; min-width: 0; }
.grouppanel { height: 38px; background: #c8d1e2; border-bottom: 1px solid var(--line); padding: 12px 8px; font-size: 13px; color: #9ba5bc; }
.rows { height: 376px; overflow: hidden; }
.grid { width: 100%; table-layout: fixed; border-collapse: collapse; font-size: 13px; line-height: 20px; color: #28324d; }
.c-mark { width: 12px; } .c-kod { width: 100px; } .c-nazwa { width: 237px; }
.grid th, .grid td { padding: 0 0 0 2px; height: 20px; text-align: left; font-weight: normal; white-space: nowrap; overflow: hidden; text-overflow: ellipsis; }
.grid th { height: 22px; background: var(--pale); border-right: 1px solid #cdd4df; color: #3f4863; text-overflow: clip; }
.grid svg { width: 8px; height: 8px; }
.grid tbody tr { background: #f5f7fa; }
.grid tbody tr:nth-child(even) { background: #ebf5ec; }
.grid tbody td:first-child, .grid .ind { background: linear-gradient(#e4e8ef, #d5dae4); }
.filter td { background: #ebf5ec; border-bottom: 2px solid #bdc7d4; height: 22px; color: #666; }
.filter td + td { text-align: center; }
.grid tbody .sel { background: #ffe3a0; }
.sel td + td { border: dotted #1f2a44; border-width: 1px 0; line-height: 18px; }
.sel td:nth-child(2) { border-left-width: 1px; }
.rowmark { display: block; width: 0; height: 0; margin-left: 2px; border: 4px solid transparent; border-left: 4px solid #1f2a44; border-right: 0; }
.summary { height: 36px; border-top: 1px solid var(--line); background: linear-gradient(#eef0f3, #e2e6eb 50%, #d9dee7 51%); }
.hscroll { height: 17px; border-top: 1px solid #f5f6f8; background: #e8eaec; display: flex; align-items: center; justify-content: flex-end; padding-right: 6px; }
.hscroll i { border: 4px solid transparent; border-left: 4px solid #858d9c; border-right: 0; }
.vscroll { width: 16px; height: 450px; background: #e9ebed; display: flex; flex-direction: column; align-items: center; }
.vscroll .up { margin: 6px 0; border: 4px solid transparent; border-bottom: 5px solid #858d9c; border-top: 0; }
.vscroll .down { margin: auto 0 6px; border: 4px solid transparent; border-top: 5px solid #858d9c; border-bottom: 0; }
.thumb { width: 14px; height: 266px; border: 1px solid #a4aec0; border-radius: 2px; background: linear-gradient(90deg, #eef0f4, #cfd6e2); display: grid; place-items: center; }
.thumb b { width: 7px; height: 9px; background: repeating-linear-gradient(#59657e 0 1px, transparent 1px 3px); }

.lowtabs { padding: 7px 5px 0 0; display: grid; gap: 1px; }
.lowtabs div { display: flex; gap: 1px; }
.lowtabs button {
  display: flex; align-items: center; justify-content: center; gap: 7px; height: 25px; white-space: nowrap;
  border: 1px solid #97a3b9; border-bottom: 0; border-radius: 2px 2px 0 0; background: linear-gradient(#eff1f4, #e0e4ea 50%, #ccd2df 51%, #d0d6e2); box-shadow: inset 1px 1px #fafbfc;
}
.lowtabs .rest { flex: 1; justify-content: flex-end; padding-right: 25px; }
.lowtabs svg { width: 16px; height: 16px; }
.lowtabs .t1 { width: 150px; } .lowtabs .t2 { width: 106px; } .lowtabs .t3 { width: 113px; }
.planner { margin-right: 2px; padding-right: 2px; border: 1px solid var(--line); border-width: 0 1px 0 0; border-top: 4px solid var(--yellow); border-bottom: 4px solid var(--yellow); }
.plannerbar { display: flex; justify-content: flex-end; height: 45px; padding: 2px 0 0; border-top: 1px solid var(--line); border-bottom: 3px solid var(--line); }
.plannerbar .tool { width: 52px; height: 38px; padding-top: 1px; padding-bottom: 2px; font-size: 11px; }
.plannerbar .raised { width: 41px; }
.raised, .drop { border: 1px solid #9aa4b6; border-radius: 2px; background: linear-gradient(#eff1f4, #dce1e9 50%, #cdd4e0 51%, #d3d9e4); }
.drop { width: 16px; height: 38px; display: grid; place-items: center; }
.plannerbody { display: flex; justify-content: flex-end; gap: 4px; height: 53px; overflow: hidden; border-bottom: 1px solid var(--line); }
.timeline { flex: 1; background: linear-gradient(#e4e8ee, #d9dee7) 0 0 / 100% 18px no-repeat, repeating-linear-gradient(#fff 0 4px, #dcdee1 4px 5px); border-right: 1px solid var(--line); }
.month { width: 144px; background: #fff; }
.monthhead { height: 18px; background: var(--pale); display: flex; justify-content: space-between; align-items: center; padding: 0 7px; color: #49536d; }
.monthhead i { border: 5px solid transparent; }
.monthhead .left { border-right-color: #33415f; border-left: 0; }
.monthhead .right { border-left-color: #33415f; border-right: 0; }
.month table { border-collapse: separate; border-spacing: 0; table-layout: fixed; width: 133px; text-align: center; }
.month th { font-weight: normal; font-size: 11px; height: 15px; line-height: 13px; padding: 0; }
.month .week { width: 14px; }
.month thead th + th { border-bottom: 1px solid #1f2a44; }
.month tbody th { font-size: 7px; color: #c03030; border-right: 1px solid #1f2a44; }
.month td { height: 16px; line-height: 14px; padding: 0; font-size: 11px; color: #6a6350; border: 1px solid #e5c060; border-radius: 2px; background: linear-gradient(#fffbea, #ffe9ae); }
.month td.now { color: #1f2a44; text-align: right; padding-right: 2px; }
.nextweek { height: 3px; margin: 0 11px 0 14px; background: repeating-linear-gradient(90deg, #e5c060 0 1px, #fff3cf 1px 17px); }
.legend { height: 33px; display: flex; gap: 3px; padding: 2px 0; border-bottom: 1px solid var(--line); justify-content: flex-end; padding-right: 72px; line-height: 15px; }
.legend i { width: 31px; height: 21px; background: #b27f90; border: 1px solid #8590a4; box-shadow: inset 0 0 0 1px #dfe4ec; }
.mainend { height: 29px; border-bottom: 4px solid var(--yellow); }
.status { display: flex; justify-content: space-between; align-items: center; height: 18px; padding: 0 4px; background: var(--pale); border-top: 1px solid var(--line); color: #49536d; }

/* grid context menu */
.menu {
  position: absolute; z-index: 5; top: 117px; right: 101px; width: 283px; padding: 3px 0 2px; border: 2px solid #e8121a; border-radius: 5px;
  background: #f1f1f1; box-shadow: inset 2px 2px 5px rgba(0, 0, 0, .25), 2px 3px 5px rgba(0, 0, 0, .3); font: 11px/22px var(--seg); color: #111;
}
.menu li { position: relative; display: grid; grid-template-columns: 22px 1fr auto; column-gap: 9px; height: 22px; align-items: center; margin: 0 2px 0 1px; padding-right: 21px; white-space: nowrap; }
.menu li > span:not(.badge) { grid-column: 2; grid-row: 1; }
.menu li > svg { width: 18px; height: 18px; justify-self: center; grid-column: 1; grid-row: 1; }
.menu kbd { font: inherit; grid-column: 3; grid-row: 1; }
.menu i { grid-column: 3; grid-row: 1; border: 4px solid transparent; border-left: 5px solid #111; border-right: 0; margin-right: -14px; }
.menu .hot { background: #91c9f7; }
.menu .on { background: linear-gradient(#91c9f7, #91c9f7) 0 0 / 22px 100% no-repeat; }
.menu .on svg { width: 12px; height: 10px; }
.menu .line { height: 3px; margin: 3px 2px 0 31px; border-top: 1px solid #d0d0d0; }

/* import dialog */
.dialog { position: absolute; z-index: 10; left: 52px; right: 172px; top: 411px; }
.dialoghead, .dialogfoot { position: relative; background: #eeeff3; border: 1px solid var(--line); display: flex; align-items: center; }
.dialoghead { height: 30px; justify-content: space-between; padding: 0 9px 0 20px; }
.dialoghead h3 { font-size: 13px; line-height: 16px; border: 1px solid #8c98ae; padding: 0 8px; }
.dialoghead svg { width: 20px; height: 20px; }
.dialogbody { background: var(--bg); padding: 5px 4px 5px 5px; }
.source { display: flex; height: 58px; padding-left: 1px; }
.importicon { width: 52px; height: 47px; display: grid; place-items: center; border: 1px solid var(--line); margin-top: 1px; }
.importicon svg { width: 36px; height: 32px; }
.fields { display: grid; gap: 2px; align-content: start; }
.field { position: relative; display: flex; align-items: center; gap: 2px; }
.field > label:first-child { width: 80px; text-align: right; font-size: 10px; white-space: nowrap; }
.filefield input { width: 300px; height: 21px; border: 2px solid #7d8899; }
.dots { display: flex; gap: 1px; margin-left: 2px; }
.dots i { width: 2px; height: 2px; background: #000; }
.combo { position: relative; width: 248px; height: 20px; }
.combo.small { width: 148px; height: 18px; }
.combo select { appearance: none; width: 100%; height: 100%; display: block; }
.combo::after { content: ""; position: absolute; right: 5px; top: 8px; border: 4px solid transparent; border-top-color: #1f2a44; border-bottom: 0; }
fieldset { margin: 0; padding: 3px 3px 4px; border: 1px solid var(--line); border-radius: 2px; min-width: 0; }
legend { margin-left: 1px; padding: 0 4px; font-weight: bold; color: #8792ab; height: 14px; line-height: 13px; }
.sheet { position: relative; height: 243px; background: #fff; border: 1px solid var(--line); display: flex; align-items: center; justify-content: center; padding: 19px 0 0 10px; }
.corner { position: absolute; left: 0; top: 0; width: 12px; height: 20px; display: grid; place-items: center; background: #dfe3ea; }
.corner svg { width: 8px; height: 8px; }
.dtabs { display: flex; align-items: flex-end; height: 26px; padding-left: 3px; }
.dtabs button { height: 24px; width: 49px; border: 1px solid var(--line); border-bottom: 0; background: linear-gradient(#f0f2f5, #dde2e9 50%, #ccd3df); border-radius: 2px 2px 0 0; white-space: nowrap; }
.dtabs .on { width: 118px; height: 26px; border-color: #f4ead0; background: linear-gradient(#fffdf6, #fff3d2 50%, #ffe9b4 51%, var(--yellow)); }
.config { border: solid var(--line); border-width: 0 1px; border-top: 4px solid var(--yellow); border-bottom: 4px solid var(--yellow); padding: 11px 11px 12px; }
.config .field { gap: 2px; height: 20px; }
.config .field > label:first-child { width: 53px; }
.clearx { width: 14px; height: 14px; margin-left: 4px; }
.field .trim { display: flex; align-items: center; gap: 2px; margin-left: 16px; white-space: nowrap; }
.mapping { position: relative; height: 160px; margin: 1px 0; background: #fff; border: 1px solid var(--line); }
.mapping table { width: 100%; border-collapse: collapse; table-layout: fixed; }
.mapping th { height: 19px; padding: 0 2px; text-align: left; font-weight: normal; background: var(--pale); }
.mapping th:first-child { width: 406px; border-right: 1px solid #e8ebf0; }
.mapping p { text-align: center; padding-top: 63px; }
.saverow input { width: 248px; height: 20px; }
.save { width: 16px; height: 16px; margin-left: 3px; }
.dialogfoot { height: 41px; padding: 0 25px 0 9px; }
.push { display: flex; align-items: center; justify-content: center; gap: 4px; height: 30px; border: 1px solid #aab3c3; border-radius: 3px; background: linear-gradient(#f0f2f5, #dfe3ea 50%, #cdd3df 51%, #d3d8e3); color: #8e97aa; white-space: nowrap; }
.check { width: 180px; }
.check svg { width: 22px; height: 18px; }
.import { width: 100px; margin-left: auto; }
.import svg { width: 14px; height: 14px; }
.quit { display: flex; align-items: center; gap: 5px; margin-left: 33px; margin-right: -4px; }
.quit svg { width: 16px; height: 16px; }

/* numbered callouts */
.badge {
  position: absolute; z-index: 7; width: 29px; height: 29px; border: 2px solid #f01820; border-radius: 50%; background: #d22a31;
  color: #fbe6e6; font: 14px/25px var(--ui); text-align: center; box-shadow: 2px 3px 5px rgba(40, 20, 40, .4);
}
.badge-1 { left: 145px; top: -12px; }
.badge-2 { right: 27px; top: -1px; }
.badge-3 { right: 59px; top: -3px; }
.badge-4 { left: 401px; top: -4px; }
.badge-5 { left: 78px; top: 57px; }
.badge-6 { left: 87px; top: 42px; }
.badge-7 { left: 531px; top: 42px; }
.badge-8 { left: 236px; top: 5px; }
.badge-9 { right: 103px; top: 5px; }
.mark { position: absolute; border: 2px solid #e8121a; border-radius: 5px; box-shadow: 1px 2px 4px rgba(40, 20, 40, .45); pointer-events: none; }
.mark-nav { left: -1px; top: -2px; width: 159px; height: 27px; }
.mark-file { left: -1px; top: -5px; width: 409px; height: 30px; }
.arrow { position: absolute; z-index: 12; left: 525px; top: 195px; width: 230px; height: 250px; overflow: visible; filter: drop-shadow(3px 3px 2px rgba(60, 60, 60, .45)); pointer-events: none; }
```
